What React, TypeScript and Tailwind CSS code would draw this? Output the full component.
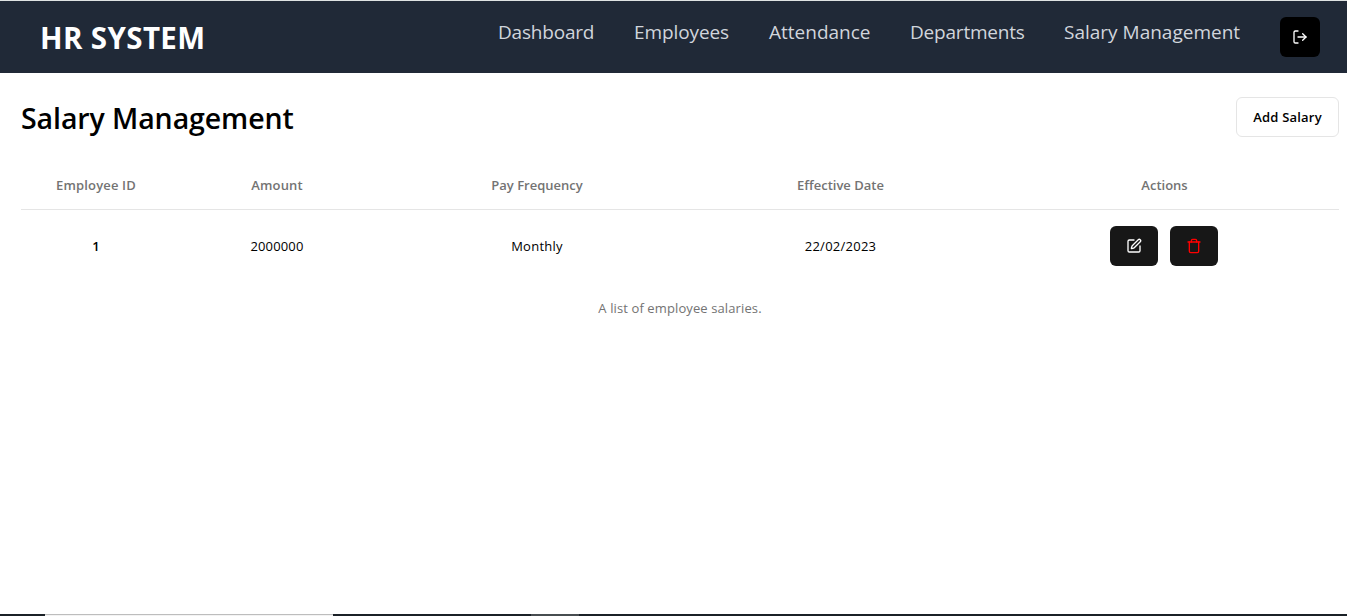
import { LogOut, SquarePen, Trash } from "lucide-react";

const links = [
  { label: "Dashboard", cls: "w-24 tracking-[-0.2px]" },
  { label: "Employees", cls: "w-[95px] tracking-[-0.1px]" },
  { label: "Attendance", cls: "w-[101px] tracking-[0px]" },
  { label: "Departments", cls: "w-[114px] tracking-[-0.2px]" },
  { label: "Salary Management", cls: "w-44 tracking-[0px]" },
];

const salaries = [{ id: "1", amount: "2000000", frequency: "Monthly", date: "22/02/2023" }];

function Navbar() {
  return (
    <nav className="flex h-[73px] items-start justify-between border-t border-[#dfe3e2] bg-[#202937] pr-[27px] pl-10">
      <span className="mt-[17px] text-[29.5px] leading-10 font-bold tracking-[0.38px] whitespace-nowrap text-white">
        HR SYSTEM
      </span>
      <div className="flex items-start gap-10">
        {links.map((link) => (
          <a
            key={link.label}
            href="#"
            className={`mt-[17px] text-[19px] leading-7 whitespace-nowrap text-gray-300 ${link.cls}`}
          >
            {link.label}
          </a>
        ))}
        <button aria-label="Log out" className="mt-4 flex size-10 items-center justify-center rounded-md bg-black text-white">
          <LogOut size={16} />
        </button>
      </div>
    </nav>
  );
}

function SalaryTable() {
  return (
    <table className="mt-6 w-full table-fixed caption-bottom text-center text-[13px] leading-5">
      <caption className="mt-4 text-[13px] leading-5 tracking-[0.11px] text-[#737373]">A list of employee salaries.</caption>
      <colgroup>
        <col className="w-[150px]" />
        <col className="w-[212px]" />
        <col className="w-[308px]" />
        <col className="w-[299px]" />
        <col />
      </colgroup>
      <thead>
        <tr className="h-12 border-b border-[#e5e5e5] text-[#737373]">
          <th className="font-semibold tracking-[0.15px]">Employee ID</th>
          <th className="font-semibold tracking-[0.15px]">Amount</th>
          <th className="font-semibold">Pay Frequency</th>
          <th className="font-semibold">Effective Date</th>
          <th className="font-semibold">Actions</th>
        </tr>
      </thead>
      <tbody>
        {salaries.map((s) => (
          <tr key={s.id} className="h-[73px]">
            <td className="font-semibold">{s.id}</td>
            <td className="tracking-[0.15px]">{s.amount}</td>
            <td className="tracking-[0.25px]">{s.frequency}</td>
            <td className="tracking-[0.25px]">{s.date}</td>
            <td>
              <div className="flex justify-center gap-3 pr-0.5">
                <button aria-label="Edit" className="flex h-10 w-12 items-center justify-center rounded-md bg-[#171717] text-white">
                  <SquarePen size={16} />
                </button>
                <button aria-label="Delete" className="flex h-10 w-12 items-center justify-center rounded-md bg-[#171717] text-[#ff0000]">
                  <Trash size={16} />
                </button>
              </div>
            </td>
          </tr>
        ))}
      </tbody>
    </table>
  );
}

export default function App() {
  return (
    <div className="flex h-[616px] flex-col overflow-hidden bg-white font-['Open_Sans','Noto_Sans',sans-serif] text-black">
      <Navbar />
      <main className="flex-1 pt-6 pr-2 pl-[21px]">
        <div className="flex h-10 items-center justify-between">
          <h1 className="mt-0.5 text-[28.5px] leading-9 font-semibold tracking-[-0.09px] text-black">Salary Management</h1>
          <button className="h-10 w-[103px] rounded-md border border-[#e5e5e5] pt-px text-[13px] font-semibold tracking-[0.2px] text-black">
            Add Salary
          </button>
        </div>
        <SalaryTable />
      </main>
      <div className="flex h-0.5 shrink-0 bg-[#1b2127]">
        <div className="ml-[45px] w-72 border-t border-[#bdbdbd] bg-[#f3f3f3]" />
        <div className="ml-[198px] w-12 bg-[#474d50]" />
      </div>
    </div>
  );
}
